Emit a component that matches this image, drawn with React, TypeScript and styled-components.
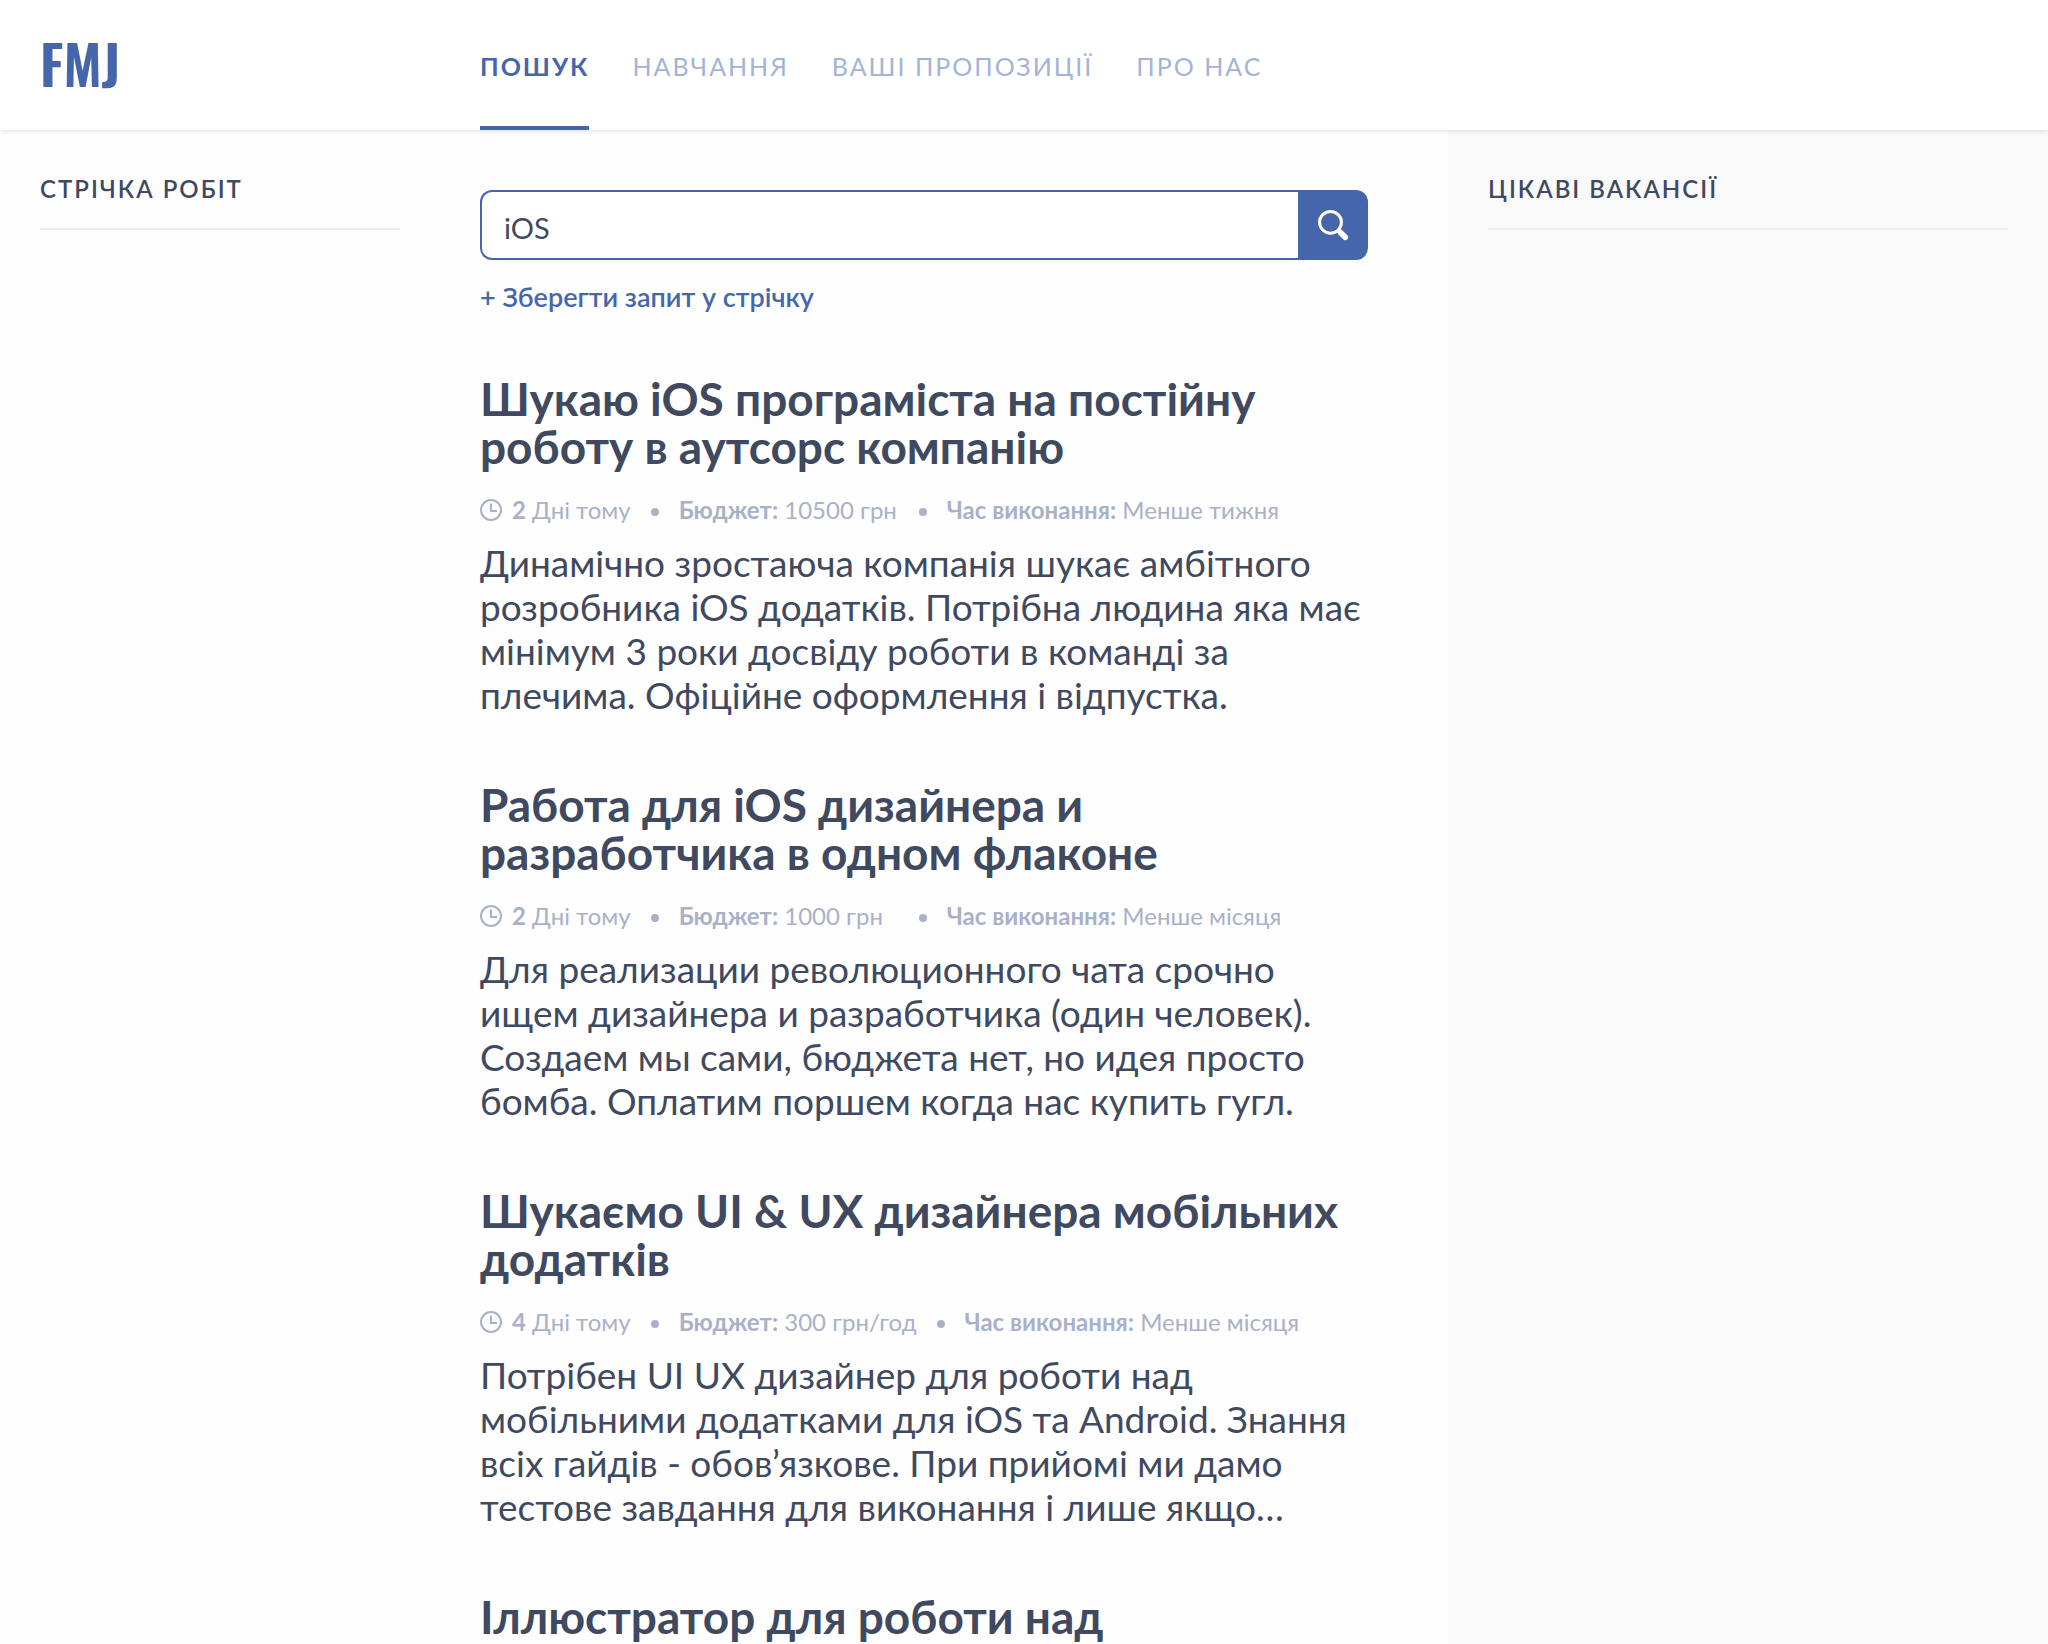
import React from "react";
import styled, { createGlobalStyle } from "styled-components";

const GlobalStyle = createGlobalStyle`
  *, *::before, *::after { box-sizing: border-box; }
  body {
    margin: 0;
    background: #fefefe;
    color: #3f4960;
    font-family: Lato, "Open Sans", sans-serif;
  }
  h1, h2, p, ul { margin: 0; padding: 0; }
`;

const columns = "440px minmax(0, 1fr) 600px";

const Page = styled.div`
  display: flex;
  flex-direction: column;
  height: 100vh;
  overflow: hidden;
`;

const Header = styled.header`
  display: grid;
  grid-template-columns: ${columns};
  height: 130px;
  flex-shrink: 0;
  background: #ffffff;
  box-shadow: 0 2px 4px rgba(68, 102, 173, 0.14);
  z-index: 1;
`;

const Logo = styled.a`
  padding: 30px 0 0 40px;
  color: #4666ab;
  font-family: "Oswald", "Roboto Condensed", "Liberation Sans Narrow", "DejaVu Sans Condensed", sans-serif;
  font-size: 55px;
  line-height: 64px;
  font-weight: 600;
  text-decoration: none;
`;

const Nav = styled.nav`
  display: flex;
  gap: 43px;
  padding-left: 40px;
`;

const NavLink = styled.a<{ $active?: boolean }>`
  display: flex;
  align-items: center;
  padding-top: 6px;
  border-bottom: 4px solid ${(p) => (p.$active ? "#4666ab" : "transparent")};
  color: ${(p) => (p.$active ? "#4666ab" : "#a3b3d8")};
  font-size: 25px;
  font-weight: ${(p) => (p.$active ? 700 : 400)};
  letter-spacing: 2px;
  text-decoration: none;
  white-space: nowrap;
`;

const Body = styled.div`
  display: grid;
  grid-template-columns: ${columns};
  flex: 1;
  min-height: 0;
`;

const Side = styled.aside<{ $tinted?: boolean }>`
  padding: 41px 40px 0;
  background: ${(p) => (p.$tinted ? "#f9f9f9" : "transparent")};
`;

const SideTitle = styled.h2`
  padding-bottom: 21px;
  border-bottom: 2px solid #e9eef5;
  font-size: 24px;
  line-height: 36px;
  font-weight: 600;
  letter-spacing: 2px;
`;

const Main = styled.main`
  min-width: 0;
  overflow: hidden;
  padding: 60px 80px 0 40px;
`;

const SearchForm = styled.form`
  display: flex;
  height: 70px;
`;

const SearchInput = styled.input`
  flex: 1;
  min-width: 0;
  padding: 4px 22px 0;
  border: 2px solid #4666ab;
  border-right: 0;
  border-radius: 12px 0 0 12px;
  outline: none;
  background: #ffffff;
  color: #3f4960;
  font: 400 29px Lato, sans-serif;
`;

const SearchButton = styled.button`
  display: flex;
  align-items: center;
  justify-content: center;
  width: 70px;
  padding: 0;
  border: 0;
  border-radius: 0 12px 12px 0;
  background: #4666ab;
  cursor: pointer;
`;

const SaveButton = styled.button`
  display: block;
  margin-top: 19px;
  padding: 0;
  border: 0;
  background: none;
  color: #4666ab;
  font: 600 27px/36px Lato, sans-serif;
  cursor: pointer;
`;

const JobList = styled.div`
  display: flex;
  flex-direction: column;
  gap: 64px;
  padding-top: 60px;
`;

const Job = styled.article`
  display: flex;
  flex-direction: column;
`;

const JobTitle = styled.h1`
  font-size: 46px;
  line-height: 48px;
  font-weight: 700;
`;

const Meta = styled.ul`
  display: flex;
  align-items: center;
  margin-top: 21px;
  color: #a9b1c9;
  font-size: 24px;
  line-height: 36px;
  list-style: none;
  white-space: nowrap;
`;

const Age = styled.li`
  display: flex;
  align-items: center;
  gap: 10px;
`;

const Budget = styled.li`
  min-width: 220px;
`;

const Dot = styled.li`
  width: 8px;
  height: 8px;
  margin: 4px 20px 0;
  border-radius: 50%;
  background: #a9b1c9;
`;

const Text = styled.p`
  margin-top: 13px;
  font-size: 37px;
  line-height: 44px;
`;

const SearchIcon = () => (
  <svg width="32" height="32" viewBox="0 0 32 32" fill="none" stroke="#fff" aria-hidden="true">
    <circle cx="13.5" cy="13.3" r="10.9" strokeWidth="3" />
    <path d="M21 21 24 24" strokeWidth="4" />
    <path d="M23.5 23.5 28.2 28.2" strokeWidth="5.8" strokeLinecap="round" />
  </svg>
);

const ClockIcon = () => (
  <svg width="22" height="22" viewBox="0 0 22 22" fill="none" stroke="#a9b1c9" strokeWidth="2" aria-hidden="true">
    <circle cx="11" cy="11" r="10" />
    <path d="M11 4.5V12h6" />
  </svg>
);

type JobData = {
  title: string;
  details?: { days: number; budget: string; term: string; text: string };
};

const jobs: JobData[] = [
  {
    title: "Шукаю iOS програміста на постійну роботу в аутсорс компанію",
    details: {
      days: 2,
      budget: "10500 грн",
      term: "Менше тижня",
      text: "Динамічно зростаюча компанія шукає амбітного розробника iOS додатків. Потрібна людина яка має мінімум 3 роки досвіду роботи в команді за плечима. Офіційне оформлення і відпустка.",
    },
  },
  {
    title: "Работа для iOS дизайнера и разработчика в одном флаконе",
    details: {
      days: 2,
      budget: "1000 грн",
      term: "Менше місяця",
      text: "Для реализации революционного чата срочно ищем дизайнера и разработчика (один человек). Создаем мы сами, бюджета нет, но идея просто бомба. Оплатим поршем когда нас купить гугл.",
    },
  },
  {
    title: "Шукаємо UI & UX дизайнера мобільних додатків",
    details: {
      days: 4,
      budget: "300 грн/год",
      term: "Менше місяця",
      text: "Потрібен UI UX дизайнер для роботи над мобільними додатками для iOS та Android. Знання всіх гайдів - обов’язкове. При прийомі ми дамо тестове завдання для виконання і лише якщо…",
    },
  },
  { title: "Іллюстратор для роботи над" },
];

export default function App() {
  return (
    <Page>
      <GlobalStyle />
      <Header>
        <Logo href="#">FMJ</Logo>
        <Nav>
          <NavLink href="#" $active>ПОШУК</NavLink>
          <NavLink href="#">НАВЧАННЯ</NavLink>
          <NavLink href="#">ВАШІ ПРОПОЗИЦІЇ</NavLink>
          <NavLink href="#">ПРО НАС</NavLink>
        </Nav>
      </Header>
      <Body>
        <Side>
          <SideTitle>СТРІЧКА РОБІТ</SideTitle>
        </Side>
        <Main>
          <SearchForm onSubmit={(e) => e.preventDefault()}>
            <SearchInput type="text" aria-label="Пошук" defaultValue="iOS" />
            <SearchButton type="submit" aria-label="Шукати">
              <SearchIcon />
            </SearchButton>
          </SearchForm>
          <SaveButton type="button">+ Зберегти запит у стрічку</SaveButton>
          <JobList>
            {jobs.map(({ title, details }) => (
              <Job key={title}>
                <JobTitle>{title}</JobTitle>
                {details && (
                  <>
                    <Meta>
                      <Age>
                        <ClockIcon />
                        <span><b>{details.days}</b> Дні тому</span>
                      </Age>
                      <Dot aria-hidden="true" />
                      <Budget><b>Бюджет:</b> {details.budget}</Budget>
                      <Dot aria-hidden="true" />
                      <li><b>Час виконання:</b> {details.term}</li>
                    </Meta>
                    <Text>{details.text}</Text>
                  </>
                )}
              </Job>
            ))}
          </JobList>
        </Main>
        <Side $tinted>
          <SideTitle>ЦІКАВІ ВАКАНСІЇ</SideTitle>
        </Side>
      </Body>
    </Page>
  );
}
